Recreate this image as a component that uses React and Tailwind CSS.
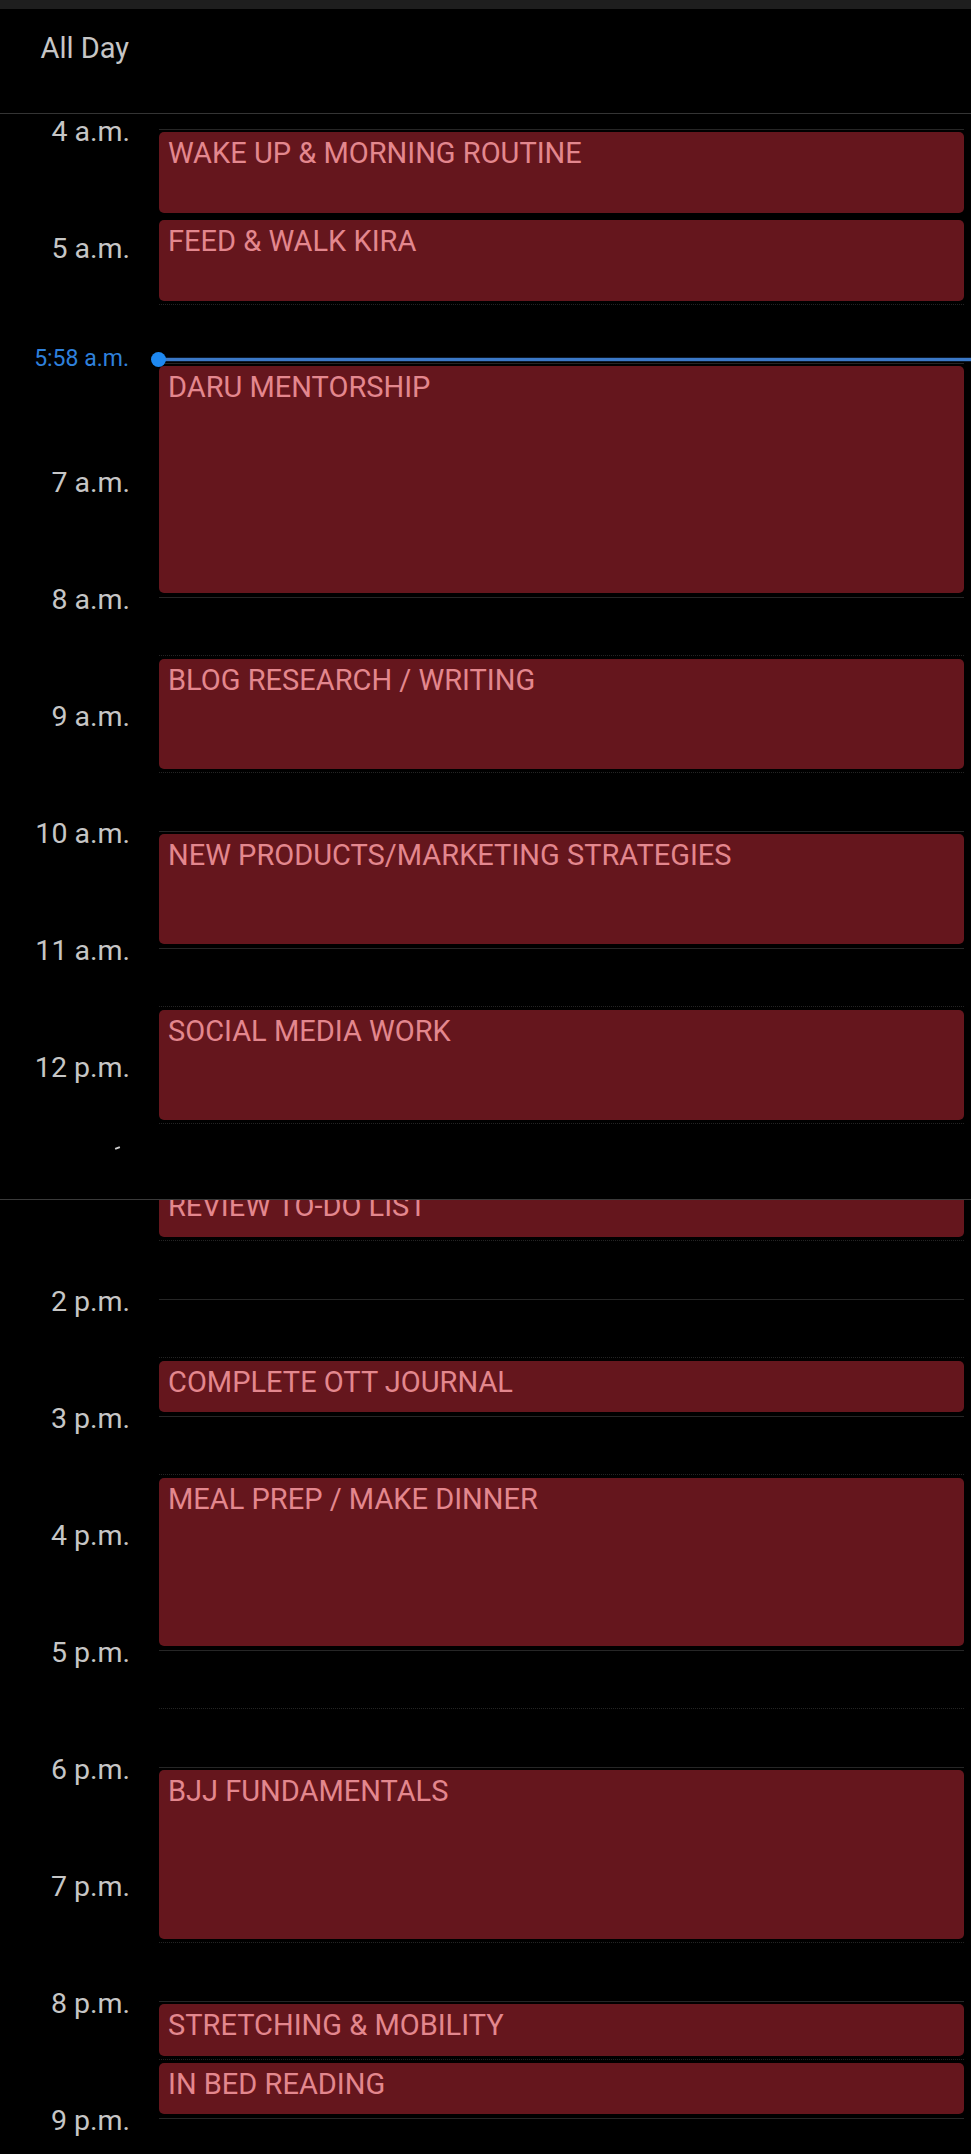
import React from "react";

const HOUR = 117;
const Y = (h) => 18 + (h - 4) * HOUR;

const events = [
  { t: "WAKE UP & MORNING ROUTINE", s: 4, e: 4.75 },
  { t: "FEED & WALK KIRA", s: 4.75, e: 5.5 },
  { t: "DARU MENTORSHIP", s: 6, e: 8 },
  { t: "BLOG RESEARCH / WRITING", s: 8.5, e: 9.5 },
  { t: "NEW PRODUCTS/MARKETING STRATEGIES", s: 10, e: 11 },
  { t: "SOCIAL MEDIA WORK", s: 11.5, e: 12.5 },
  { t: "REVIEW TO-DO LIST", s: 13, e: 13.5 },
  { t: "COMPLETE OTT JOURNAL", s: 14.5, e: 15 },
  { t: "MEAL PREP / MAKE DINNER", s: 15.5, e: 17 },
  { t: "BJJ FUNDAMENTALS", s: 18, e: 19.5 },
  { t: "STRETCHING & MOBILITY", s: 20, e: 20.5 },
  { t: "IN BED READING", s: 20.5, e: 21 },
];

const hours = [];
for (let h = 4; h <= 21; h++) hours.push(h);

const label = (h) => {
  if (h < 12) return `${h} a.m.`;
  if (h === 12) return "12 p.m.";
  return `${h - 12} p.m.`;
};

const NOW = 5 + 58 / 60;

function HourRow({ h }) {
  return (
    <div className="flex h-[117px] shrink-0">
      <div className="w-[130px]">
        <div
          className={
            "h-[40px] -mt-[17px] flex items-center justify-end text-[28.5px] leading-[34px] text-[#c6c6c6] " +
            (h === 6 ? "invisible" : "")
          }
        >
          {label(h)}
        </div>
      </div>
      <div className="flex-1 ml-[29px] mr-[7px] border-t border-[#262626]">
        <div className="h-[58px] border-b border-dotted border-[#242424]" />
      </div>
    </div>
  );
}

export default function App() {
  return (
    <div className="w-[971px] h-[2154px] bg-black overflow-hidden flex flex-col [font-family:Roboto,'Liberation_Sans',sans-serif]">
      <div className="h-[9px] shrink-0 bg-[#1e1e1e]" />
      <div className="h-[105px] shrink-0 border-b border-[#343434] flex">
        <div className="w-[129px] pt-[23px] text-right text-[29px] leading-[33px] text-[#c6c6c6]">
          All Day
        </div>
      </div>
      <div className="relative flex-1 pt-[15px] flex flex-col">
        {hours.map((h) => (
          <HourRow key={h} h={h} />
        ))}

        <div className="absolute left-[159px] right-[7px] top-0 bottom-0">
          {events.map((ev) => (
            <div
              key={ev.t}
              className="absolute left-0 right-0 rounded-[5px] bg-[#65161d] pl-[9px] pt-[5px] text-[29px] leading-[33px] text-[#e3878e] overflow-hidden"
              style={{ top: Y(ev.s), height: (ev.e - ev.s) * HOUR - 7 }}
            >
              {ev.t}
            </div>
          ))}
        </div>

        <div
          className="absolute left-0 right-0 h-[30px] z-10 flex items-center"
          style={{ top: Y(NOW) - 3 - 15 }}
        >
          <div className="w-[129px] text-right text-[23px] leading-[30px] text-[#2f80dc]">
            5:58 a.m.
          </div>
          <div className="flex-1 ml-[22px] flex items-center">
            <div className="flex-1 order-2 h-[3px] -ml-[7px] bg-[#3b78c6] shadow-[0_0_0_1px_#0b1a2c]" />
            <div className="order-1 relative z-10 w-[15px] h-[15px] shrink-0 rounded-full bg-[#1e88f0]" />
          </div>
        </div>

        <div className="absolute left-0 right-0 top-[1012px] h-[74px] bg-black border-b border-[#3a3a3a] z-20">
          <div className="absolute left-[115px] top-[21px] w-[5px] h-[2px] bg-[#cfcfcf] -rotate-[20deg]" />
        </div>
      </div>
    </div>
  );
}
